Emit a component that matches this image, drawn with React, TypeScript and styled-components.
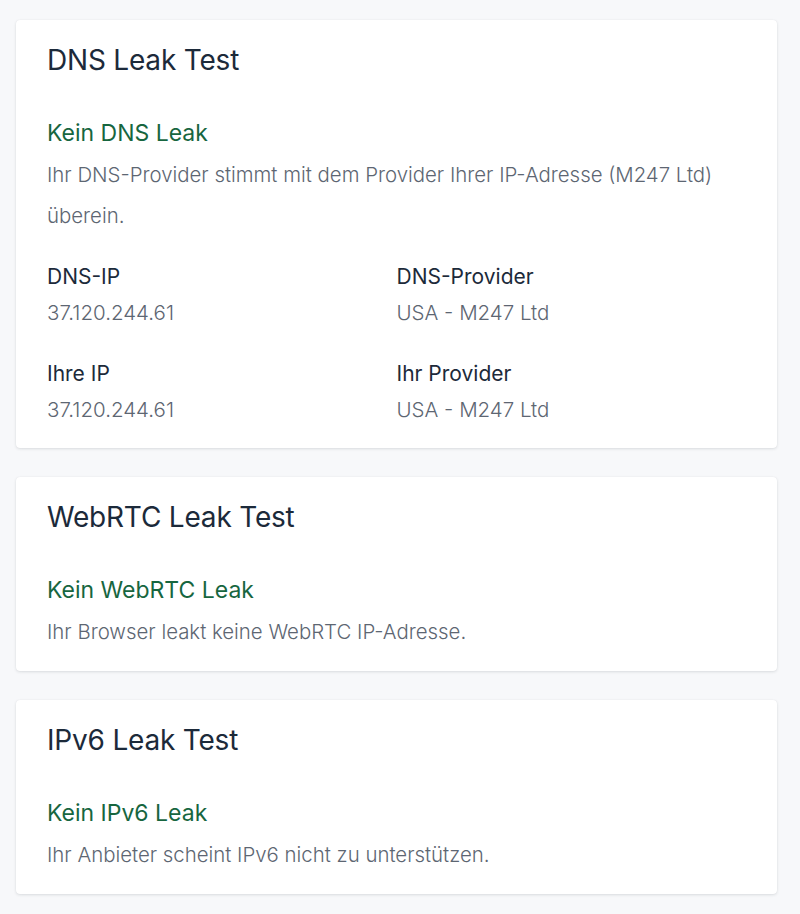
import React from 'react';
import styled, { createGlobalStyle } from 'styled-components';

// ============================================================
// STYLED COMPONENTS
// ============================================================

const GlobalStyle = createGlobalStyle`
  html, body {
    margin: 0;
    padding: 0;
    background: #f7f8fa;
  }
  body {
    font-family: Inter, "Noto Sans", "Liberation Sans", sans-serif;
    -webkit-font-smoothing: antialiased;
  }
`;

const Page = styled.div`
  display: flex;
  flex-direction: column;
  gap: 29px;
  padding: 20px 23px 21px 16px;
  background: #f7f8fa;
  min-height: 914px;
  box-sizing: border-box;
`;

const Card = styled.section`
  background: #ffffff;
  border-radius: 4px;
  box-shadow: 0 1px 3px rgba(20, 30, 45, 0.12), 0 0 1px rgba(20, 30, 45, 0.08);
  padding: 23px 31px 19px;
`;

const Title = styled.h2`
  margin: 0 0 41px;
  font-size: 28px;
  line-height: 34px;
  font-weight: 400;
  color: #1c2a3a;
  letter-spacing: -0.2px;
`;

const Status = styled.div<{ $ok: boolean }>`
  font-size: 23px;
  line-height: 30px;
  font-weight: 400;
  color: ${({ $ok }) => ($ok ? '#17663f' : '#b42318')};
  margin-bottom: 6px;
`;

const Description = styled.p`
  margin: 0;
  font-size: 20.4px;
  line-height: 41px;
  font-weight: 300;
  color: #5d6672;
`;

const InfoGrid = styled.div`
  display: grid;
  grid-template-columns: 1fr 1fr;
  row-gap: 31px;
  margin: 26px 0 4px;
`;

const InfoItem = styled.div`
  display: flex;
  flex-direction: column;
  gap: 6px;
`;

const InfoLabel = styled.div`
  font-size: 21px;
  line-height: 30px;
  color: #1c2a3a;
`;

const InfoValue = styled.div`
  font-size: 20.5px;
  line-height: 30px;
  font-weight: 300;
  color: #5d6672;
`;

// ============================================================
// DATA
// ============================================================

interface Info {
  label: string;
  value: string;
}

interface LeakTest {
  title: string;
  status: string;
  ok: boolean;
  description: string;
  info?: Info[];
}

const tests: LeakTest[] = [
  {
    title: 'DNS Leak Test',
    status: 'Kein DNS Leak',
    ok: true,
    description: 'Ihr DNS-Provider stimmt mit dem Provider Ihrer IP-Adresse (M247 Ltd) überein.',
    info: [
      { label: 'DNS-IP', value: '37.120.244.61' },
      { label: 'DNS-Provider', value: 'USA - M247 Ltd' },
      { label: 'Ihre IP', value: '37.120.244.61' },
      { label: 'Ihr Provider', value: 'USA - M247 Ltd' },
    ],
  },
  {
    title: 'WebRTC Leak Test',
    status: 'Kein WebRTC Leak',
    ok: true,
    description: 'Ihr Browser leakt keine WebRTC IP-Adresse.',
  },
  {
    title: 'IPv6 Leak Test',
    status: 'Kein IPv6 Leak',
    ok: true,
    description: 'Ihr Anbieter scheint IPv6 nicht zu unterstützen.',
  },
];

// ============================================================
// COMPONENT
// ============================================================

function LeakCard({ test }: { test: LeakTest }) {
  return (
    <Card>
      <Title>{test.title}</Title>
      <Status $ok={test.ok}>{test.status}</Status>
      <Description>{test.description}</Description>
      {test.info && (
        <InfoGrid>
          {test.info.map((item) => (
            <InfoItem key={item.label}>
              <InfoLabel>{item.label}</InfoLabel>
              <InfoValue>{item.value}</InfoValue>
            </InfoItem>
          ))}
        </InfoGrid>
      )}
    </Card>
  );
}

export default function App() {
  return (
    <>
      <GlobalStyle />
      <Page>
        {tests.map((t) => (
          <LeakCard key={t.title} test={t} />
        ))}
      </Page>
    </>
  );
}
